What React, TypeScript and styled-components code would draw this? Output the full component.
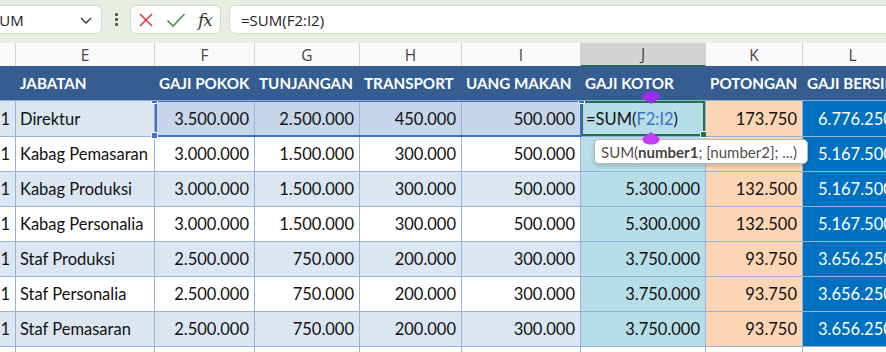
import React from "react";
import styled, { createGlobalStyle } from "styled-components";

const GlobalStyle = createGlobalStyle`
  html, body { margin: 0; padding: 0; background: #ffffff; overflow: hidden; }
  body { font-family: "Lato", "Noto Sans", sans-serif; }
  * { box-sizing: border-box; }
`;

const COLS = "16px 139px 100px 105px 102px 119px 125px 97px 100px";

const Page = styled.div`
  width: 886px;
  height: 352px;
  overflow: hidden;
  display: flex;
  flex-direction: column;
`;

const Toolbar = styled.div`
  height: 43px;
  flex: none;
  background: #e8eee2;
  display: flex;
  align-items: flex-start;
  padding-top: 5px;
`;

const NameBox = styled.div`
  margin-left: -20px;
  width: 122px;
  height: 29px;
  background: #fff;
  border: 1px solid #d6dbd2;
  border-radius: 6px;
  display: flex;
  align-items: center;
  justify-content: space-between;
  padding: 0 8px 0 10px;
  font-family: "Open Sans", "Noto Sans", sans-serif;
  font-size: 15px;
  color: #222;
`;

const Dots = styled.div`
  width: 28px;
  height: 29px;
  display: flex;
  flex-direction: column;
  align-items: center;
  justify-content: center;
  gap: 2px;
  span {
    width: 3px;
    height: 3px;
    background: #555;
    border-radius: 1px;
  }
`;

const FxBox = styled.div`
  width: 91px;
  height: 29px;
  background: #fff;
  border: 1px solid #d6dbd2;
  border-radius: 6px;
  display: flex;
  align-items: center;
  padding-left: 7px;
  gap: 12px;
`;

const FxLabel = styled.span`
  font-family: "DejaVu Serif", "Liberation Serif", serif;
  font-style: italic;
  font-size: 17px;
  color: #333;
  letter-spacing: -1px;
`;

const FormulaInput = styled.div`
  margin-left: 8px;
  flex: 1;
  height: 29px;
  background: #fff;
  border: 1px solid #d6dbd2;
  border-right: none;
  border-radius: 6px 0 0 6px;
  display: flex;
  align-items: center;
  padding-left: 11px;
  font-family: "Open Sans", "Noto Sans", sans-serif;
  font-size: 15px;
  color: #222;
`;

const GridRow = styled.div<{ $h: number; $z?: number }>`
  display: grid;
  grid-template-columns: ${COLS};
  height: ${(p) => p.$h}px;
  flex: none;
  position: relative;
  z-index: ${(p) => p.$z ?? 1};
`;

const ColHead = styled.div<{ $active?: boolean }>`
  background: ${(p) => (p.$active ? "#d3d3d3" : "#fafafa")};
  border-right: 1px solid #d4d4d4;
  border-bottom: ${(p) => (p.$active ? "2px solid #1f7244" : "1px solid #d4d4d4")};
  display: flex;
  align-items: center;
  justify-content: center;
  font-family: "Open Sans", "Noto Sans", sans-serif;
  font-size: 15.5px;
  color: #444;
`;

const HeadCell = styled.div`
  background: #355d8f;
  color: #fff;
  font-weight: 700;
  font-size: 15.2px;
  display: flex;
  align-items: center;
  padding-left: 4px;
  white-space: nowrap;
  overflow: hidden;
  border-bottom: 1px solid #8eaedb;
`;

type Tone = "light" | "white" | "sel" | "teal" | "peach" | "blue";
const toneBg: Record<Tone, string> = {
  light: "#dce6f1",
  white: "#ffffff",
  sel: "#c8d6eb",
  teal: "#b7dee8",
  peach: "#fcd5b4",
  blue: "#0070c0",
};

const Cell = styled.div<{ $tone: Tone; $num?: boolean; $inset?: number }>`
  background: ${(p) => toneBg[p.$tone]};
  color: ${(p) => (p.$tone === "blue" ? "#ffffff" : "#111")};
  border-right: 1px solid #95b3d7;
  border-bottom: 1px solid #95b3d7;
  display: flex;
  align-items: center;
  justify-content: ${(p) => (p.$num && !p.$inset ? "flex-end" : "flex-start")};
  padding: ${(p) => (p.$inset ? `0 0 0 ${p.$inset}px` : p.$num ? "0 5px 0 0" : "0 0 0 4px")};
  font-size: 16.5px;
  white-space: nowrap;
  overflow: hidden;
  position: relative;
`;

const ActiveCell = styled(Cell)`
  box-shadow: inset 0 0 0 2px #217346;
  justify-content: flex-start;
  padding-left: 5px;
  overflow: visible;
`;

const RefText = styled.span`
  color: #3b6fc6;
`;

const RangeBox = styled.div`
  position: absolute;
  left: 155px;
  top: -1px;
  width: 427px;
  height: 37px;
  border: 2px solid #3f6fc6;
  pointer-events: none;
`;

const Handle = styled.div<{ $x: string; $y: string; $c: string }>`
  position: absolute;
  width: 7px;
  height: 7px;
  background: ${(p) => p.$c};
  border: 1px solid #fff;
  left: ${(p) => p.$x};
  top: ${(p) => p.$y};
`;

const Drop = styled.div<{ $top: number }>`
  position: absolute;
  left: 641px;
  top: ${(p) => p.$top}px;
  line-height: 0;
  z-index: 3;
`;

const Tooltip = styled.div`
  position: absolute;
  left: 594px;
  top: 2px;
  width: 214px;
  height: 25px;
  background: #fff;
  border: 1px solid #b9b9b9;
  border-radius: 5px;
  box-shadow: 0 2px 4px rgba(0, 0, 0, 0.18);
  display: flex;
  align-items: center;
  padding-left: 6px;
  font-size: 15px;
  color: #505050;
  white-space: nowrap;
  z-index: 4;
  b { font-weight: 700; color: #444; }
`;

type RowData = [string, string, string, string, string, string, string, string];
const rows: RowData[] = [
  ["Direktur", "3.500.000", "2.500.000", "450.000", "500.000", "", "173.750", "6.776.250"],
  ["Kabag Pemasaran", "3.000.000", "1.500.000", "300.000", "500.000", "", "", "5.167.500"],
  ["Kabag Produksi", "3.000.000", "1.500.000", "300.000", "500.000", "5.300.000", "132.500", "5.167.500"],
  ["Kabag Personalia", "3.000.000", "1.500.000", "300.000", "500.000", "5.300.000", "132.500", "5.167.500"],
  ["Staf Produksi", "2.500.000", "750.000", "200.000", "300.000", "3.750.000", "93.750", "3.656.250"],
  ["Staf Personalia", "2.500.000", "750.000", "200.000", "300.000", "3.750.000", "93.750", "3.656.250"],
  ["Staf Pemasaran", "2.500.000", "750.000", "200.000", "300.000", "3.750.000", "93.750", "3.656.250"],
  ["", "", "", "", "", "", "", ""],
];

const headers = ["", "JABATAN", "GAJI POKOK", "TUNJANGAN", "TRANSPORT", "UANG MAKAN", "GAJI KOTOR", "POTONGAN", "GAJI BERSIH"];
const letters = ["", "E", "F", "G", "H", "I", "J", "K", "L"];

const CrossIcon = () => (
  <svg width="16" height="16" viewBox="0 0 16 16">
    <path d="M2 2 L14 14 M14 2 L2 14" stroke="#e5383b" strokeWidth="1.6" fill="none" />
  </svg>
);
const CheckIcon = () => (
  <svg width="20" height="16" viewBox="0 0 20 16">
    <path d="M1.5 8.5 L7 14 L18.5 2" stroke="#3d9a4c" strokeWidth="1.6" fill="none" />
  </svg>
);
const Chevron = () => (
  <svg width="14" height="10" viewBox="0 0 14 10">
    <path d="M2 3 L7 8 L12 3" stroke="#333" strokeWidth="1.4" fill="none" />
  </svg>
);

const DropShape = ({ down, color }: { down: boolean; color: string }) => (
  <svg width="20" height="13" viewBox="0 0 20 13">
    <path
      d={
        down
          ? "M10 13 C7 10 0.5 8.5 1.5 5 C2.5 1.5 6 0.5 10 0.5 C14 0.5 17.5 1.5 18.5 5 C19.5 8.5 13 10 10 13 Z"
          : "M10 0 C7 3 0.5 4.5 1.5 8 C2.5 11.5 6 12.5 10 12.5 C14 12.5 17.5 11.5 18.5 8 C19.5 4.5 13 3 10 0 Z"
      }
      fill={color}
    />
  </svg>
);

export default function App() {
  return (
    <Page>
      <GlobalStyle />
      <Toolbar>
        <NameBox>
          <span>SUM</span>
          <Chevron />
        </NameBox>
        <Dots>
          <span />
          <span />
          <span />
        </Dots>
        <FxBox>
          <CrossIcon />
          <CheckIcon />
          <FxLabel>fx</FxLabel>
        </FxBox>
        <FormulaInput>=SUM(F2:I2)</FormulaInput>
      </Toolbar>

      <GridRow $h={23}>
        {letters.map((l, i) => (
          <ColHead key={i} $active={l === "J"}>
            {l}
          </ColHead>
        ))}
      </GridRow>

      <GridRow $h={35} $z={3}>
        {headers.map((h, i) => (
          <HeadCell key={i}>{h}</HeadCell>
        ))}
        <Drop $top={25}>
          <DropShape down color="#9d2cee" />
        </Drop>
      </GridRow>

      {rows.map((r, ri) => {
        const base: Tone = ri % 2 === 0 ? "light" : "white";
        const first = ri === 0;
        const rowTone: Tone = first ? "sel" : base;
        return (
          <GridRow key={ri} $h={first ? 36 : 35} $z={first ? 2 : 1}>
            <Cell $tone={base} $num>
              {r[0] ? "1" : ""}
            </Cell>
            <Cell $tone={base}>{r[0]}</Cell>
            <Cell $tone={rowTone} $num>{r[1]}</Cell>
            <Cell $tone={rowTone} $num>{r[2]}</Cell>
            <Cell $tone={rowTone} $num>{r[3]}</Cell>
            <Cell $tone={rowTone} $num>{r[4]}</Cell>
            {first ? (
              <ActiveCell $tone="teal">
                =SUM(<RefText>F2:I2</RefText>)
                <Handle $x="119px" $y="30px" $c="#217346" />
              </ActiveCell>
            ) : (
              <Cell $tone={r[0] ? "teal" : "white"} $num>{r[5]}</Cell>
            )}
            <Cell $tone={r[0] ? "peach" : "white"} $num>{r[6]}</Cell>
            <Cell $tone={r[0] ? "blue" : "white"} $num $inset={15}>
              {r[7]}
            </Cell>
            {first && (
              <>
                <RangeBox />
                <Handle $x="151px" $y="-4px" $c="#3f6fc6" />
                <Handle $x="151px" $y="31px" $c="#3f6fc6" />
                <Handle $x="578px" $y="-4px" $c="#3f6fc6" />
                <Drop $top={31}>
                  <DropShape down={false} color="#c23ff5" />
                </Drop>
              </>
            )}
            {ri === 1 && (
              <Tooltip>
                SUM(<b>number1</b>; [number2]; ...)
              </Tooltip>
            )}
          </GridRow>
        );
      })}
    </Page>
  );
}
